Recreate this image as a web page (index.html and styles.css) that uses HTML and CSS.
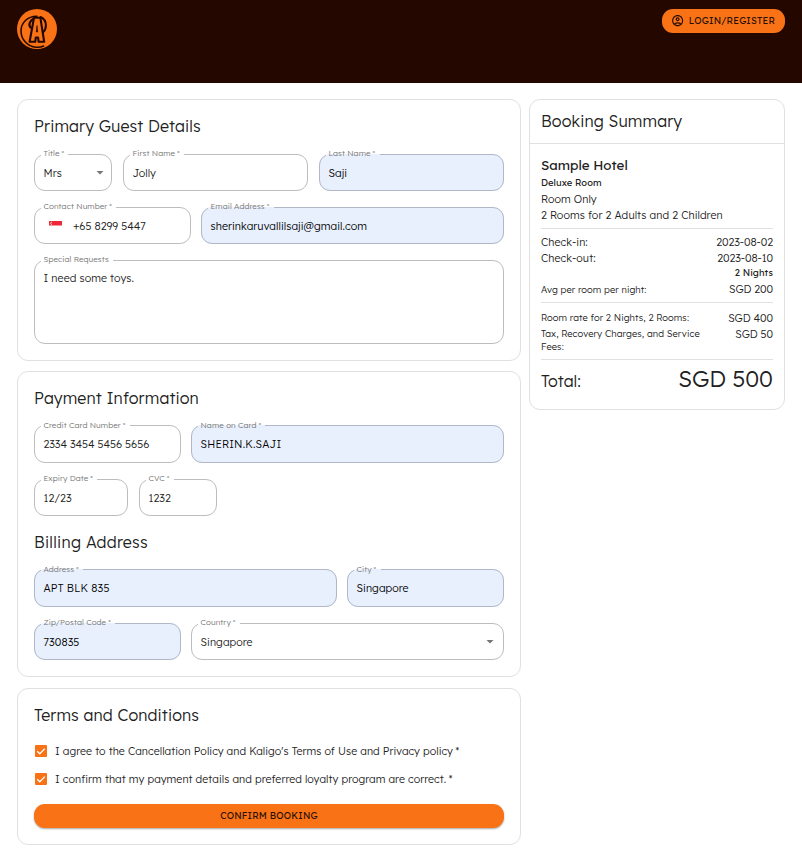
FILE: index.html
```html
<!DOCTYPE html>
<html lang="en">
<head>
<meta charset="utf-8">
<title>Booking</title>
<link rel="stylesheet" href="styles.css">
</head>
<body>
<header class="topbar">
  <svg class="logo" viewBox="0 0 40 40" aria-hidden="true">
    <circle cx="20" cy="20" r="20" fill="#f97316"/>
    <g fill="none" stroke="#240800" stroke-linecap="round">
      <path d="M20 7.200C10.500 7 4 14 4 22c0 8.500 6.500 15.500 15 16.200 3 .3 5.500-.2 7.500-1.200" stroke-width="1.600"/>
      <path d="M13.500 18.500c-1.300-1.500-1.300-3.500-.6-5 .8-1.800 2.100-3.100 3.900-4" stroke-width="2.200"/>
      <path d="M23.500 8c3.500 1.600 5.400 4.700 5.400 8.200 0 2.800-.9 5.200-2.800 7" stroke-width="2"/>
    </g>
    <path d="M17 8.800h6.400l3.800 24h-5.600l-.5-4.300h-2.300l-.6 4.300h-5.600z" fill="#f97316" stroke="#240800" stroke-width="2.100" stroke-linejoin="round"/>
    <path d="M20 16.500l-.7 6.500h1.400z" fill="#240800" stroke="#240800" stroke-width=".6"/>
  </svg>
  <button class="btn login">
    <svg class="user" viewBox="0 0 24 24" aria-hidden="true"><path d="M12 2C6.480 2 2 6.480 2 12s4.480 10 10 10 10-4.480 10-10S17.520 2 12 2zM7.350 18.500C8.660 17.560 10.260 17 12 17s3.340.56 4.650 1.500C15.340 19.440 13.740 20 12 20s-3.340-.56-4.650-1.500zm10.790-1.380C16.450 15.800 14.320 15 12 15s-4.450.8-6.140 2.120C4.700 15.730 4 13.950 4 12c0-4.420 3.580-8 8-8s8 3.580 8 8c0 1.950-.7 3.730-1.860 5.120zM12 6c-1.930 0-3.500 1.570-3.500 3.500S10.070 13 12 13s3.500-1.570 3.500-3.500S13.930 6 12 6zm0 5c-.83 0-1.500-.67-1.500-1.500S11.170 8 12 8s1.500.67 1.500 1.500S12.830 11 12 11z"/></svg>
    <span>LOGIN/REGISTER</span>
  </button>
</header>

<main class="page">
  <div class="forms">
    <section class="card">
      <h2 class="heading heading-guest">Primary Guest Details</h2>
      <div class="row row-name">
        <fieldset class="field"><legend>Title&thinsp;*</legend><div class="value">Mrs<i class="caret"></i></div></fieldset>
        <fieldset class="field"><legend>First Name&thinsp;*</legend><div class="value">Jolly</div></fieldset>
        <fieldset class="field filled"><legend>Last Name&thinsp;*</legend><div class="value">Saji</div></fieldset>
      </div>
      <div class="row row-contact">
        <fieldset class="field"><legend>Contact Number&thinsp;*</legend><div class="value phone"><svg class="flag" viewBox="0 0 13 9" aria-hidden="true"><path fill="#fff" d="M0 0h13v9H0z"/><path fill="#ed2939" d="M0 0h13v4.500H0z"/><path d="M3 1a1.300 1.300 0 1 0 0 2.600" fill="none" stroke="#fff" stroke-width=".7"/></svg><span>+65 8299 5447</span></div></fieldset>
        <fieldset class="field filled"><legend>Email Address&thinsp;*</legend><div class="value">sherinkaruvallilsaji@gmail.com</div></fieldset>
      </div>
      <div class="row">
        <fieldset class="field area"><legend>Special Requests</legend><div class="value">I need some toys.</div></fieldset>
      </div>
    </section>

    <section class="card">
      <h2 class="heading">Payment Information</h2>
      <div class="row row-card">
        <fieldset class="field tall"><legend>Credit Card Number&thinsp;*</legend><div class="value digits">2334 3454 5456 5656</div></fieldset>
        <fieldset class="field tall filled"><legend>Name on Card&thinsp;*</legend><div class="value caps">SHERIN.K.SAJI</div></fieldset>
      </div>
      <div class="row row-expiry">
        <fieldset class="field"><legend>Expiry Date&thinsp;*</legend><div class="value">12/23</div></fieldset>
        <fieldset class="field"><legend>CVC&thinsp;*</legend><div class="value">1232</div></fieldset>
      </div>
      <h2 class="heading heading-billing">Billing Address</h2>
      <div class="row row-address">
        <fieldset class="field tall filled"><legend>Address&thinsp;*</legend><div class="value caps">APT BLK 835</div></fieldset>
        <fieldset class="field tall filled"><legend>City&thinsp;*</legend><div class="value">Singapore</div></fieldset>
      </div>
      <div class="row row-card">
        <fieldset class="field filled"><legend>Zip/Postal Code&thinsp;*</legend><div class="value">730835</div></fieldset>
        <fieldset class="field"><legend>Country&thinsp;*</legend><div class="value">Singapore<i class="caret caret-wide"></i></div></fieldset>
      </div>
    </section>

    <section class="card terms">
      <h2 class="heading">Terms and Conditions</h2>
      <div class="check"><svg class="box" viewBox="0 0 12 12" aria-hidden="true"><rect width="12" height="12" rx="1" fill="#f97316"/><path d="M2.200 6.200l2.600 2.600 5-5.200" fill="none" stroke="#fff" stroke-width="1.300"/></svg><span>I agree to the Cancellation Policy and Kaligo's Terms of Use and Privacy policy&thinsp;*</span></div>
      <div class="check"><svg class="box" viewBox="0 0 12 12" aria-hidden="true"><rect width="12" height="12" rx="1" fill="#f97316"/><path d="M2.200 6.200l2.600 2.600 5-5.200" fill="none" stroke="#fff" stroke-width="1.300"/></svg><span>I confirm that my payment details and preferred loyalty program are correct.&thinsp;*</span></div>
      <button class="btn submit">CONFIRM BOOKING</button>
    </section>
  </div>

  <aside class="summary">
    <h2 class="summary-title">Booking Summary</h2>
    <div class="summary-body">
      <div class="hotel">Sample Hotel</div>
      <div class="room">Deluxe Room</div>
      <div class="text">Room Only</div>
      <div class="text">2 Rooms for 2 Adults and 2 Children</div>
      <hr class="rule">
      <div class="line text"><span>Check-in:</span><span class="digits">2023-08-02</span></div>
      <div class="line text"><span>Check-out:</span><span class="digits">2023-08-10</span></div>
      <div class="nights">2 Nights</div>
      <div class="line text avg"><span class="small">Avg per room per night:</span><span class="digits">SGD 200</span></div>
      <hr class="rule rule-rate">
      <div class="line text"><span class="small">Room rate for 2 Nights, 2 Rooms:</span><span class="digits">SGD 400</span></div>
      <div class="line text"><span class="small tax">Tax, Recovery Charges, and Service Fees:</span><span class="digits">SGD 50</span></div>
      <hr class="rule rule-total">
      <div class="line total"><span class="total-label">Total:</span><span class="total-price">SGD 500</span></div>
    </div>
  </aside>
</main>
</body>
</html>
```

FILE: styles.css
```css
* { box-sizing: border-box; }

body {
  margin: 0;
  background: #fff;
  color: #212121;
  font: 330 10.67px/16px Lexend, Inter, "Open Sans", sans-serif;
  letter-spacing: 0.007em;
}

.topbar {
  height: 83px;
  padding: 9px 17px 0;
  display: flex;
  justify-content: space-between;
  align-items: flex-start;
  background: #240800;
}
.logo { width: 40px; height: 40px; }

.btn {
  height: 24px;
  padding: 0;
  border: 0;
  border-radius: 11px;
  background: #f97316;
  color: #2b0f02;
  font: 380 9.33px/24px Lexend, Inter, sans-serif;
  letter-spacing: 0.018em;
  display: flex;
  align-items: center;
  justify-content: center;
}
.login {
  width: 123px;
  padding-left: 8.500px;
  justify-content: flex-start;
  gap: 5px;
}
.user { width: 13.300px; height: 13.300px; fill: currentColor; flex: none; }

.page {
  display: flex;
  align-items: flex-start;
  gap: 8px;
  padding: 16px 17px;
}
.forms {
  width: 504px;
  display: flex;
  flex-direction: column;
  gap: 10px;
}
.card {
  border: 1px solid #e0e0e0;
  border-radius: 11px;
  padding: 16px;
}
.terms { margin-top: 1px; }

.heading {
  margin: 0 0 16px;
  font-size: 16px;
  font-weight: 330;
  line-height: 21px;
  letter-spacing: 0.007em;
}
.heading-guest { margin-bottom: 17px; }
.heading-billing { margin-top: 16px; letter-spacing: 0.015em; }

.row { display: grid; gap: 11px; }
.row + .row { margin-top: 16px; }
.row-name { grid-template-columns: 78px 1fr 1fr; }
.row-contact { grid-template-columns: 157px 1fr; gap: 10px; }
.row-card { grid-template-columns: 147px 1fr; gap: 10px; }
.row-expiry { grid-template-columns: 94px 78px; }
.row-address { grid-template-columns: 303px 1fr; gap: 10px; }

.field {
  min-width: 0;
  height: 42px;
  margin: -5px 0 0;
  padding: 0;
  border: 1px solid #bdbdbd;
  border-radius: 11px;
}
.field legend {
  height: 11px;
  margin-left: 5.500px;
  padding: 0 4px 0 3px;
  color: #757575;
  font-size: 8px;
  line-height: 9px;
}
.field.tall { height: 43px; }
.field.tall legend { line-height: 10px; }
.field.area { height: 89px; }
.field.filled { background: #e8f0fe; border-color: #b0b7c6; }

.value {
  height: 25px;
  padding: 0 8.500px;
  display: flex;
  align-items: center;
}
.area .value { height: 24px; }
.filled .value { color: #000; }
.caret {
  width: 8px;
  height: 4px;
  margin-left: auto;
  margin-right: -1.500px;
  background: #757575;
  clip-path: polygon(0 0, 100% 0, 50% 100%);
}
.caret-wide { margin-right: 0.500px; }
.phone { padding-left: 14px; gap: 11px; letter-spacing: 0; }
.flag { width: 13px; height: 9px; }
.digits { letter-spacing: -0.005em; }
.caps { letter-spacing: 0.018em; }

.check {
  height: 28px;
  padding-left: 1px;
  display: flex;
  align-items: center;
  gap: 8px;
  letter-spacing: 0.005em;
}
.heading + .check { margin-top: -5px; }
.box { width: 12px; height: 12px; flex: none; }
.submit {
  width: 100%;
  margin-top: 11px;
  box-shadow: 0 1px 2px rgba(0, 0, 0, 0.35);
}

.summary {
  width: 256px;
  height: 311px;
  border: 1px solid #e0e0e0;
  border-radius: 11px;
}
.summary-title {
  margin: 0;
  padding: 0 11px;
  height: 44px;
  border-bottom: 1px solid #e0e0e0;
  font-size: 16px;
  font-weight: 330;
  line-height: 43px;
  letter-spacing: 0.007em;
}
.summary-body { padding: 12px 11px 0; }
.hotel {
  font-size: 13.330px;
  font-weight: 390;
  line-height: 19px;
  letter-spacing: 0;
}
.room {
  height: 16px;
  font-size: 9.330px;
  font-weight: 370;
  line-height: 15px;
}
.text { line-height: 16px; }
.rule {
  height: 1px;
  margin: 5px 0;
  border: 0;
  background: #e0e0e0;
}
.line { display: flex; justify-content: space-between; }
.nights {
  height: 16px;
  font-size: 9.330px;
  font-weight: 370;
  line-height: 13px;
  text-align: right;
}
.avg { height: 15px; line-height: 15px; }
.small { font-size: 9.330px; letter-spacing: 0.008em; }
.tax { width: 170px; padding-top: 1px; line-height: 13px; }
.rule-rate { margin: 5px 0 7px; }
.rule-total { margin-top: 6px; }
.total { align-items: baseline; }
.total-label { font-size: 16px; letter-spacing: 0; }
.total-price { font-size: 22.670px; line-height: 28px; letter-spacing: 0; }
```
